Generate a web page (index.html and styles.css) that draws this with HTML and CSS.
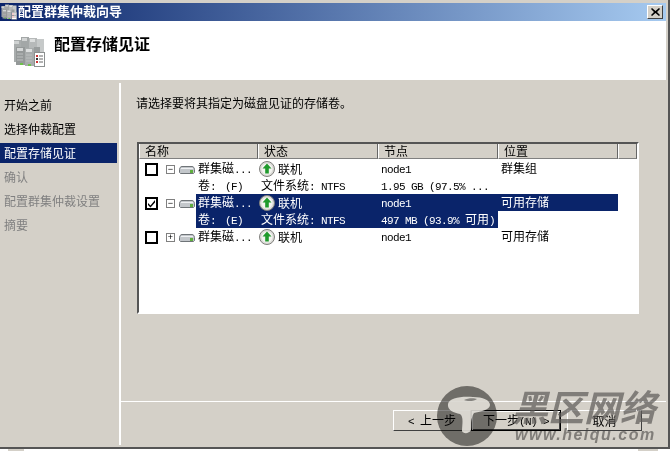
FILE: index.html
```html
<!DOCTYPE html>
<html lang="zh">
<head>
<meta charset="utf-8">
<title>配置群集仲裁向导</title>
<link rel="stylesheet" href="styles.css">
</head>
<body>
<svg class="defs" width="0" height="0">
  <symbol id="servers" viewBox="0 0 32 32">
    <rect x="8" y="1" width="8" height="14" fill="#a3a7a7"/>
    <rect x="16" y="2" width="8" height="14" fill="#b6b9b9"/>
    <rect x="24" y="3" width="7" height="16" fill="#c6c9c9"/>
    <rect x="9" y="2" width="5" height="3" fill="#d2d4d4"/>
    <rect x="17" y="3" width="5" height="3" fill="#dcdede"/>
    <rect x="1" y="4" width="7" height="22" fill="#a9adad"/>
    <rect x="1" y="5" width="5" height="3" fill="#cfd2d2"/>
    <rect x="3" y="11" width="9" height="18" fill="#959999"/>
    <rect x="12" y="12" width="9" height="18" fill="#a8acac"/>
    <rect x="21" y="11" width="6" height="7" fill="#999d9d"/>
    <rect x="4" y="12" width="6" height="3" fill="#d4d6d6"/>
    <rect x="13" y="13" width="6" height="3" fill="#dcdede"/>
    <path d="M4 18h6M4 21h6M4 24h6M13 19h6M13 22h6M13 25h6" stroke="#bcbfbf"/>
    <rect x="7" y="27" width="3" height="2" fill="#6cc04a"/>
    <rect x="15" y="28" width="3" height="2" fill="#6cc04a"/>
    <rect x="21.500" y="16.500" width="10" height="14" fill="#fff" stroke="#8c9090"/>
    <rect x="23" y="19" width="2" height="2" fill="#c33"/>
    <rect x="23" y="22" width="2" height="2" fill="#333"/>
    <rect x="23" y="25" width="2" height="2" fill="#c33"/>
    <path d="M26 20h4M26 23h4M26 26h4" stroke="#666"/>
  </symbol>
  <symbol id="disk" viewBox="0 0 16 9">
    <path d="M3 .5h10c1.500 0 2.500 1.500 2.500 3v3l-1 1h-13l-1-1v-3C.5 2 1.500 .5 3 .5z" fill="#c3c7cb" stroke="#6f7478"/>
    <path d="M2 2.500h12" stroke="#eef0f2"/>
    <rect x="11" y="4" width="3" height="3" fill="#5fae3f"/>
  </symbol>
  <symbol id="online" viewBox="0 0 16 16">
    <circle cx="8" cy="8" r="7.500" fill="#dcdcd8" stroke="#7f7f7c"/>
    <circle cx="8" cy="8" r="5.500" fill="#f4f4f1"/>
    <path d="M8 2.500l4.500 5H9.800V12.500H6.200V7.500H3.500z" fill="#1f9a2c"/>
  </symbol>
</svg>
<div class="window">
  <div class="titlebar">
    <svg class="title-icon"><use href="#servers"/></svg>
    <span class="title-text">配置群集仲裁向导</span>
    <span class="close">
      <svg width="9" height="8" viewBox="0 0 9 8"><path d="M1 0l3.500 3L8 0l1 1-3 3 3 3-1 1-3.500-3L1 8 0 7l3-3-3-3z" fill="#000"/></svg>
    </span>
  </div>
  <header class="header">
    <svg class="header-icon"><use href="#servers"/></svg>
    <h1 class="heading">配置存储见证</h1>
  </header>
  <div class="main">
    <nav class="sidebar">
      <div class="step">开始之前</div>
      <div class="step">选择仲裁配置</div>
      <div class="step current">配置存储见证</div>
      <div class="step off">确认</div>
      <div class="step off">配置群集仲裁设置</div>
      <div class="step off">摘要</div>
    </nav>
    <section class="content">
      <p class="intro">请选择要将其指定为磁盘见证的存储卷。</p>
      <div class="list">
        <div class="list-head">
          <div class="col col-name">名称</div>
          <div class="col col-std">状态</div>
          <div class="col col-std">节点</div>
          <div class="col col-std">位置</div>
          <div class="col col-fill"></div>
        </div>
        <div class="row">
          <div class="gutter">
            <span class="check"></span>
            <span class="exp">−</span>
            <svg class="disk"><use href="#disk"/></svg>
          </div>
          <div class="cell">群集磁<span class="mono">...</span></div>
          <div class="cell status"><svg class="online"><use href="#online"/></svg>联机</div>
          <div class="cell node"><span class="mono">node1</span></div>
          <div class="cell loc">群集组</div>
          <div class="cell">卷<span class="mono vol">: (F)</span></div>
          <div class="cell sub">文件系统<span class="mono">: NTFS</span></div>
          <div class="cell node"><span class="mono">1.95 GB (97.5% ...</span></div>
          <div class="cell"></div>
        </div>
        <div class="row">
          <div class="gutter">
            <span class="check">
              <svg width="9" height="9" viewBox="0 0 9 9"><path d="M1 4l2.500 2.500L8 1v2.500L3.500 8.500 1 6z" fill="#000"/></svg>
            </span>
            <span class="exp">−</span>
            <svg class="disk"><use href="#disk"/></svg>
          </div>
          <div class="cell hi">群集磁<span class="mono">...</span></div>
          <div class="cell status hi"><svg class="online"><use href="#online"/></svg>联机</div>
          <div class="cell node hi"><span class="mono">node1</span></div>
          <div class="cell loc hi">可用存储</div>
          <div class="cell hi">卷<span class="mono vol">: (E)</span></div>
          <div class="cell sub hi">文件系统<span class="mono">: NTFS</span></div>
          <div class="cell node hi"><span class="mono">497 MB (93.9% </span>可用<span class="mono">)</span></div>
          <div class="cell"></div>
        </div>
        <div class="row">
          <div class="gutter">
            <span class="check"></span>
            <span class="exp">+</span>
            <svg class="disk"><use href="#disk"/></svg>
          </div>
          <div class="cell">群集磁<span class="mono">...</span></div>
          <div class="cell status"><svg class="online"><use href="#online"/></svg>联机</div>
          <div class="cell node"><span class="mono">node1</span></div>
          <div class="cell loc">可用存储</div>
        </div>
      </div>
      <footer class="footer">
        <button class="btn btn-prev"><span class="mono">&lt; </span>上一步</button>
        <button class="btn btn-next">下一步<span class="mono">(N) &gt;</span></button>
        <button class="btn btn-cancel">取消</button>
      </footer>
    </section>
  </div>
  <div class="watermark">
    <div class="wm-disc"></div>
    <svg class="wm-logo" width="60" height="60" viewBox="0 0 60 60">
      <path d="M11 18C12 12 24 10 36 11 46 11 53 14 53 19 53 24 42 26 37 27 33 33 35 40 34 44 32 48 26 48 25 45 25 39 27 31 23 28 17 27 10 24 11 18z" fill="#ece9e2"/>
      <path d="M27 14c4-2 10-2 13-1-2 2-9 3-13 1z" fill="#8a8884"/>
    </svg>
    <span class="wm-cn">黑区网络</span>
    <span class="wm-en">www.heiqu.com</span>
  </div>
</div>
<div class="sliver">
  <span class="sliver-a"></span>
  <span class="sliver-b"></span>
</div>
</body>
</html>
```
FILE: styles.css
```css
* { box-sizing: border-box; }
html, body { margin: 0; padding: 0; }
body {
  width: 670px;
  height: 451px;
  overflow: hidden;
  background: #fff;
  font: 12px/17px "Noto Sans CJK SC", "Liberation Sans", sans-serif;
  color: #000;
}
.defs { position: absolute; }
.window {
  position: relative;
  width: 670px;
  height: 449px;
  padding: 3px 2px 2px 0;
  background: #d4d0c8;
  border-right: 2px solid #555;
  border-bottom: 2px solid #555;
  display: flex;
  flex-direction: column;
}
.titlebar {
  height: 18px;
  flex: none;
  display: flex;
  align-items: center;
  padding: 0 3px 0 1px;
  background: linear-gradient(to right, #0a246a, #a6caf0);
}
.title-icon { width: 16px; height: 16px; flex: none; }
.title-text {
  margin: -2px 0 0 1px;
  font-size: 13px;
  line-height: 16px;
  font-weight: 700;
  color: #fff;
}
.close {
  margin-left: auto;
  width: 16px;
  height: 14px;
  display: flex;
  align-items: center;
  justify-content: center;
  background: #d4d0c8;
  border: 1px solid;
  border-color: #fff #404040 #404040 #fff;
}
.header {
  height: 62px;
  flex: none;
  display: flex;
  align-items: flex-start;
  padding: 15px 0 0 13px;
  background: #fff;
  border-bottom: 3px solid;
  border-image: linear-gradient(to bottom, #d4d0c8 0 1px, #fff 1px 2px, #d4d0c8 2px) 3;
}
.header-icon { width: 32px; height: 32px; flex: none; }
.heading {
  margin: -3px 0 0 9px;
  font-size: 16px;
  line-height: 20px;
  font-weight: 700;
}
.main { flex: 1; display: flex; min-height: 0; }
.sidebar {
  width: 121px;
  flex: none;
  padding-top: 12px;
  border-right: 2px solid #fff;
  display: flex;
  flex-direction: column;
  gap: 4px;
}
.step {
  width: 117px;
  height: 20px;
  line-height: 20px;
  padding-left: 4px;
  white-space: nowrap;
}
.step.current { background: #0a246a; color: #fff; }
.step.off { color: #808080; }
.content { flex: 1; display: flex; flex-direction: column; min-width: 0; }
.intro { margin: 11px 0 0 15px; height: 17px; line-height: 17px; }
.list {
  width: 502px;
  height: 172px;
  margin: 31px 0 0 16px;
  background: #fff;
  border: 2px solid;
  border-color: #555 #fff #fff #555;
}
.list-head {
  height: 15px;
  margin-bottom: 1px;
  display: flex;
  background: #d4d0c8;
  line-height: 14px;
}
.col {
  height: 15px;
  border: 1px solid;
  border-color: #fff #666 #808080 #fff;
  border-top: 0;
  padding-left: 5px;
  flex: none;
}
.col-name { width: 119px; }
.col-std { width: 120px; }
.col-fill { flex: 1; }
.row {
  display: grid;
  grid-template-columns: 57px 62px 120px 120px 120px;
  grid-auto-rows: 17px;
}
.gutter {
  grid-row: 1 / span 2;
  display: flex;
  align-items: flex-start;
  padding: 3px 0 0 6px;
}
.check {
  width: 13px;
  height: 13px;
  flex: none;
  border: 2px solid #000;
  background: #fff;
  display: flex;
}
.exp {
  width: 9px;
  height: 9px;
  flex: none;
  margin: 2px 0 0 8px;
  border: 1px solid #808080;
  font: 9px/7px "Liberation Sans", sans-serif;
  text-align: center;
  color: #000;
  background: #fff;
}
.disk { width: 16px; height: 9px; flex: none; margin: 3px 0 0 4px; }
.cell {
  padding-left: 2px;
  line-height: 16px;
  white-space: nowrap;
  overflow: hidden;
}
.cell.hi { background: #0a246a; color: #fff; }
.status { display: flex; align-items: center; padding-left: 1px; }
.online { width: 16px; height: 16px; flex: none; margin-right: 3px; }
.sub { padding-left: 3px; }
.node { padding-left: 3px; }
.loc { padding-left: 3px; }
.mono {
  font-family: "Liberation Mono", monospace;
  font-size: 11px;
  letter-spacing: -0.6px;
  white-space: pre;
}
.vol { word-spacing: 3px; }
.footer {
  margin-top: auto;
  height: 44px;
  flex: none;
  border-top: 1px solid #fff;
  padding: 8px 0 0 272px;
  display: flex;
  align-items: flex-start;
}
.btn {
  height: 21px;
  padding: 0;
  font: 12px/17px "Noto Sans CJK SC", "Liberation Sans", sans-serif;
  background: #d4d0c8;
  color: #000;
  border: 1px solid;
  border-color: #fff #404040 #404040 #fff;
  flex: none;
}
.btn-prev { width: 78px; }
.btn-next {
  width: 90px;
  border-color: #000;
  box-shadow: inset 1px 1px #fff, inset -1px -1px #404040;
}
.btn-cancel { width: 75px; margin-left: 6px; }
.watermark { position: absolute; inset: 0; pointer-events: none; }
.wm-disc {
  position: absolute;
  left: 437px;
  top: 386px;
  width: 60px;
  height: 60px;
  border-radius: 50%;
  background: #868584;
  mix-blend-mode: multiply;
}
.wm-logo { position: absolute; left: 437px; top: 386px; opacity: 0.85; }
.wm-cn {
  position: absolute;
  left: 512px;
  top: 380px;
  font-size: 36px;
  line-height: 50px;
  font-weight: 700;
  font-style: italic;
  color: rgba(95, 93, 90, 0.72);
  white-space: nowrap;
}
.wm-en {
  position: absolute;
  left: 515px;
  top: 426px;
  font: italic 700 16px/18px "Liberation Sans", sans-serif;
  letter-spacing: 1.500px;
  color: rgba(95, 93, 90, 0.72);
  white-space: nowrap;
}
.sliver { height: 2px; display: flex; padding-left: 8px; }
.sliver-a { width: 16px; background: #d4d0c8; }
.sliver-b { width: 20px; margin-left: 614px; background: #d4d0c8; }
```
